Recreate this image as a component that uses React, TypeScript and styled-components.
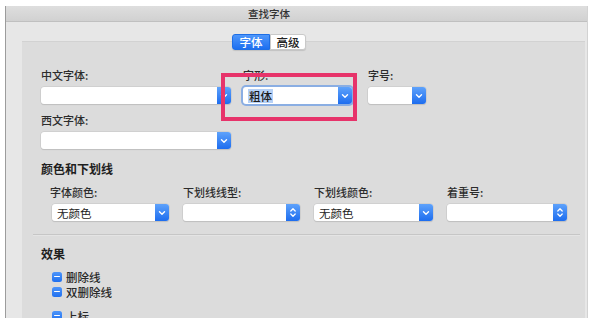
import React from "react";
import styled, { createGlobalStyle } from "styled-components";

const GlobalStyle = createGlobalStyle`
  html, body {
    margin: 0;
    padding: 0;
    background: #ffffff;
  }
  body {
    font-family: "Noto Sans CJK SC", "Noto Sans", sans-serif;
    color: #2b2b2b;
  }
`;

const Window = styled.div`
  margin: 6px 0 0 5px;
  width: 583px;
  height: 312px;
  box-sizing: border-box;
  background: #e7e7e7;
  border-left: 1px solid #9c9c9c;
  border-right: 1px solid #d2d2d2;
  overflow: hidden;
  display: flex;
  flex-direction: column;
`;

const TitleBar = styled.div`
  height: 16px;
  flex: none;
  box-sizing: border-box;
  display: flex;
  align-items: center;
  justify-content: center;
  padding-right: 55px;
  background: linear-gradient(#dedede, #d1d1d1);
  border-bottom: 1px solid #c0c0c0;
  font-size: 10.5px;
  font-weight: 500;
  color: #333;
`;

const Content = styled.div`
  flex: 1;
  display: flex;
  flex-direction: column;
  padding: 12px 2px 0 16px;
  min-height: 0;
`;

const Tabs = styled.div`
  display: flex;
  justify-content: center;
  padding-right: 69px;
  margin-bottom: -9px;
  position: relative;
  z-index: 1;
`;

const Tab = styled.div<{ $active?: boolean; $w: number }>`
  width: ${p => p.$w}px;
  height: 16px;
  box-sizing: border-box;
  display: flex;
  align-items: center;
  justify-content: center;
  font-size: 11.5px;
  font-weight: 500;
  color: ${p => (p.$active ? "#ffffff" : "#222")};
  background: ${p => (p.$active ? "linear-gradient(#4f97fb, #1c6ff0)" : "#ffffff")};
  border: 1px solid ${p => (p.$active ? "#1e6fe6" : "#c9c9c9")};
  border-radius: ${p => (p.$active ? "3px 0 0 3px" : "0 3px 3px 0")};
  box-shadow: 0 1px 1px rgba(0, 0, 0, 0.12);
`;

const Panel = styled.div`
  flex: 1;
  background: #dcdcdc;
  border-top: 1px solid #d2d2d2;
  padding: 26px 0 0 19px;
  display: flex;
  flex-direction: column;
`;

const FontSection = styled.div`
  position: relative;
  display: flex;
  flex-direction: column;
`;

const FontRow = styled.div<{ $mt?: number }>`
  display: flex;
  margin-top: ${p => p.$mt ?? 0}px;
`;

const Field = styled.div<{ $w: number; $ml?: number }>`
  width: ${p => p.$w}px;
  margin-left: ${p => p.$ml ?? 0}px;
  display: flex;
  flex-direction: column;
`;

const Label = styled.div<{ $ml?: number }>`
  font-size: 11px;
  line-height: 14px;
  height: 14px;
  font-weight: 500;
  color: #2c2c2c;
  margin: 0 0 5px ${p => p.$ml ?? 0}px;
  white-space: nowrap;
`;

const Combo = styled.div<{ $focus?: boolean }>`
  height: 17px;
  display: flex;
  background: #ffffff;
  border-radius: 3px;
  box-shadow: ${p =>
    p.$focus
      ? "0 0 0 2px #8aaee3"
      : "0 0 0 0.5px #c4c4c4, 0 1px 1px rgba(0,0,0,0.15)"};
`;

const ComboText = styled.div`
  flex: 1;
  display: flex;
  align-items: center;
  padding-left: 5px;
  font-size: 11.5px;
  color: #1c1c1c;
`;

const Selected = styled.span`
  background: #b6d1f6;
  padding: 0 1px;
  line-height: 14px;
  font-weight: 500;
`;

const ArrowButton = styled.div`
  width: 14px;
  flex: none;
  display: flex;
  align-items: center;
  justify-content: center;
  background: linear-gradient(#5ea2fb, #1d6def);
  border-radius: 0 3px 3px 0;
`;

const Highlight = styled.div`
  position: absolute;
  left: 180px;
  top: 5px;
  width: 136px;
  height: 48px;
  box-sizing: border-box;
  border: 4px solid #e7336a;
  pointer-events: none;
`;

const SectionTitle = styled.div<{ $mt: number }>`
  margin-top: ${p => p.$mt}px;
  font-size: 12px;
  line-height: 14px;
  font-weight: 700;
  color: #1e1e1e;
`;

const ColorGrid = styled.div`
  margin: 9px 0 0 11px;
  display: grid;
  grid-template-columns: 117px 117px 119px 120px;
  column-gap: 14px;
`;

const Separator = styled.div`
  margin: 13px 5px 0 -8px;
  height: 1px;
  background: #c6c6c6;
  border-bottom: 1px solid #e4e4e4;
`;

const CheckRow = styled.div<{ $mt?: number }>`
  display: flex;
  align-items: center;
  gap: 4px;
  margin: ${p => p.$mt ?? 0}px 0 0 11px;
  height: 15px;
  font-size: 11.5px;
  font-weight: 500;
  color: #2a2a2a;
`;

const CheckBox = styled.div`
  width: 10px;
  height: 10px;
  border-radius: 2.5px;
  background: linear-gradient(#4d95fa, #2070ef);
  display: flex;
  align-items: center;
  justify-content: center;
  &::after {
    content: "";
    width: 6px;
    height: 1.6px;
    background: #fff;
    border-radius: 1px;
  }
`;

const ChevronDown = () => (
  <svg width="8" height="6" viewBox="0 0 8 6">
    <path d="M1.5 1.8 L4 4.2 L6.5 1.8" fill="none" stroke="#fff" strokeWidth="1.4" strokeLinecap="round" strokeLinejoin="round" />
  </svg>
);

const Stepper = () => (
  <svg width="8" height="11" viewBox="0 0 8 11">
    <path d="M1.8 4 L4 1.8 L6.2 4" fill="none" stroke="#fff" strokeWidth="1.3" strokeLinecap="round" strokeLinejoin="round" />
    <path d="M1.8 7 L4 9.2 L6.2 7" fill="none" stroke="#fff" strokeWidth="1.3" strokeLinecap="round" strokeLinejoin="round" />
  </svg>
);

const Select = ({ value, focus, stepper }: { value?: React.ReactNode; focus?: boolean; stepper?: boolean }) => (
  <Combo $focus={focus}>
    <ComboText>{value}</ComboText>
    <ArrowButton>{stepper ? <Stepper /> : <ChevronDown />}</ArrowButton>
  </Combo>
);

const colorFields = [
  { label: "字体颜色:", value: "无颜色", stepper: false, ml: -2, w: 117 },
  { label: "下划线线型:", value: "", stepper: true, ml: 0, w: 117 },
  { label: "下划线颜色:", value: "无颜色", stepper: false, ml: 0, w: 119 },
  { label: "着重号:", value: "", stepper: true, ml: 0, w: 120 },
];

const effects = [
  { text: "删除线", mt: 8 },
  { text: "双删除线", mt: 0 },
  { text: "上标", mt: 9 },
];

export default function App() {
  return (
    <>
      <GlobalStyle />
      <Window>
        <TitleBar>查找字体</TitleBar>
        <Content>
          <Tabs>
            <Tab $active $w={38}>字体</Tab>
            <Tab $w={36}>高级</Tab>
          </Tabs>
          <Panel>
            <FontSection>
              <FontRow>
                <Field $w={190}>
                  <Label>中文字体:</Label>
                  <Select />
                </Field>
                <Field $w={109} $ml={12}>
                  <Label>字形:</Label>
                  <Select focus value={<Selected>粗体</Selected>} />
                </Field>
                <Field $w={58} $ml={16}>
                  <Label>字号:</Label>
                  <Select />
                </Field>
              </FontRow>
              <FontRow $mt={9}>
                <Field $w={190}>
                  <Label>西文字体:</Label>
                  <Select />
                </Field>
              </FontRow>
              <Highlight />
            </FontSection>

            <SectionTitle $mt={13}>颜色和下划线</SectionTitle>
            <ColorGrid>
              {colorFields.map(f => (
                <Field key={f.label} $w={f.w}>
                  <Label $ml={f.ml}>{f.label}</Label>
                  <Select value={f.value} stepper={f.stepper} />
                </Field>
              ))}
            </ColorGrid>

            <Separator />

            <SectionTitle $mt={11}>效果</SectionTitle>
            {effects.map(e => (
              <CheckRow key={e.text} $mt={e.mt}>
                <CheckBox />
                {e.text}
              </CheckRow>
            ))}
          </Panel>
        </Content>
      </Window>
    </>
  );
}
